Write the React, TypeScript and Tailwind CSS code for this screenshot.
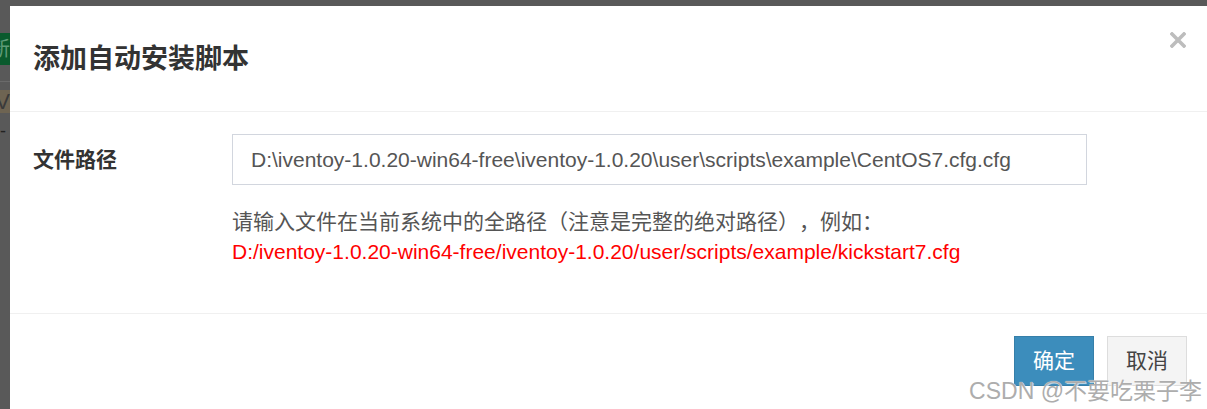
import React from "react";

const FONT = { fontFamily: '"Liberation Sans", "Noto Sans CJK SC", sans-serif' };

export default function App() {
  return (
    <div
      className="relative flex w-[1207px] h-[409px] overflow-hidden bg-[#595959]"
      style={FONT}
    >
      {/* backdrop strip on the left */}
      <div className="flex w-[10px] shrink-0 flex-col">
        <div className="h-[33px]" />
        <div className="flex h-[32px] items-center justify-end overflow-hidden bg-[#0a5a2d] text-[20px] leading-none text-[#5f9c79]">
          新
        </div>
        <div className="h-[16px]" />
        <div className="h-[1px] bg-[#6a6a6a]" />
        <div className="h-[8px]" />
        <div className="flex h-[23px] items-center justify-end overflow-hidden bg-[#6e6452] text-[22px] leading-none text-[#3a3a3a]">
          V
        </div>
        <div className="h-[10px]" />
        <div className="flex h-[16px] items-center overflow-hidden text-[18px] leading-none text-[#222]">
          -
        </div>
      </div>

      {/* modal */}
      <div className="mt-[6px] flex flex-1 flex-col bg-white">
        <div className="flex h-[106px] shrink-0 justify-between border-b border-[#f0f0f0] pl-[23px] pr-[21px]">
          <div className="self-center text-[27px] font-bold leading-[38px] text-[#333]">
            添加自动安装脚本
          </div>
          <svg
            className="mt-[26px]"
            width="16"
            height="16"
            viewBox="0 0 16 16"
          >
            <path
              d="M2 2 L14 14 M14 2 L2 14"
              stroke="#bdbdbd"
              strokeWidth="3.6"
              strokeLinecap="square"
            />
          </svg>
        </div>

        <div className="flex h-[201px] shrink-0 flex-col pl-[23px] pt-[22px]">
          <div className="flex items-center">
            <div className="w-[199px] shrink-0 text-[21px] font-bold leading-[30px] text-[#333]">
              文件路径
            </div>
            <input
              readOnly
              value="D:\iventoy-1.0.20-win64-free\iventoy-1.0.20\user\scripts\example\CentOS7.cfg.cfg"
              className="h-[51px] w-[855px] border border-[#d2d6de] bg-white px-[18px] text-[21px] text-[#555] outline-none"
              style={FONT}
            />
          </div>
          <div className="ml-[199px] mt-[22px] text-[21px] leading-[30px] [text-spacing-trim:space-all]">
            <div className="text-[#555]">
              请输入文件在当前系统中的全路径（注意是完整的绝对路径），例如：
            </div>
            <div className="text-[#ff0000]">
              D:/iventoy-1.0.20-win64-free/iventoy-1.0.20/user/scripts/example/kickstart7.cfg
            </div>
          </div>
        </div>

        <div className="flex flex-1 items-start justify-end gap-[13px] border-t border-[#f0f0f0] pr-[20px] pt-[22px]">
          <button className="h-[50px] w-[80px] border border-[#367fa9] bg-[#3c8dbc] text-[21px] leading-[30px] text-white">
            确定
          </button>
          <button className="h-[50px] w-[80px] border border-[#dddddd] bg-[#f4f4f4] text-[21px] leading-[30px] text-[#444]">
            取消
          </button>
        </div>
      </div>

      {/* CSDN watermark */}
      <div
        className="absolute bottom-[5px] right-[5px] text-[23px] leading-[26px] text-[#adadad]"
        style={{ textShadow: "0 0 1px #ffffff, 1px 1px 0 rgba(255,255,255,0.6)" }}
      >
        CSDN @不要吃栗子李
      </div>
    </div>
  );
}
